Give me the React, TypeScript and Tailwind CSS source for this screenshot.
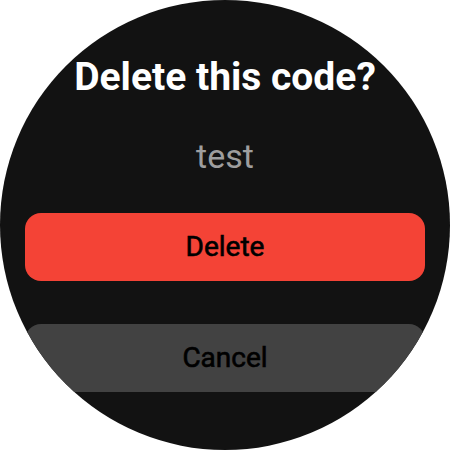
export default function App() {
  return (
    <div className="flex h-[450px] w-[450px] items-center justify-center bg-white font-['Roboto',sans-serif]">
      <div className="flex h-[450px] w-[450px] flex-col items-center overflow-hidden rounded-full bg-[#121212] px-[25px]">
        <h1 className="mt-[53px] text-[39px] leading-[48px] font-bold text-white">Delete this code?</h1>
        <p className="mt-[35px] text-[34px] leading-[40px] text-[#9e9e9e]">test</p>
        <button className="mt-[37px] h-[68px] w-full shrink-0 rounded-[16px] bg-[#f44336] text-[28px] font-normal text-black [-webkit-text-stroke:0.6px_black]">
          Delete
        </button>
        <button className="mt-[43px] h-[68px] w-full shrink-0 rounded-[16px] bg-[#424242] text-[28px] font-normal text-black [-webkit-text-stroke:0.6px_black]">
          Cancel
        </button>
      </div>
    </div>
  );
}
